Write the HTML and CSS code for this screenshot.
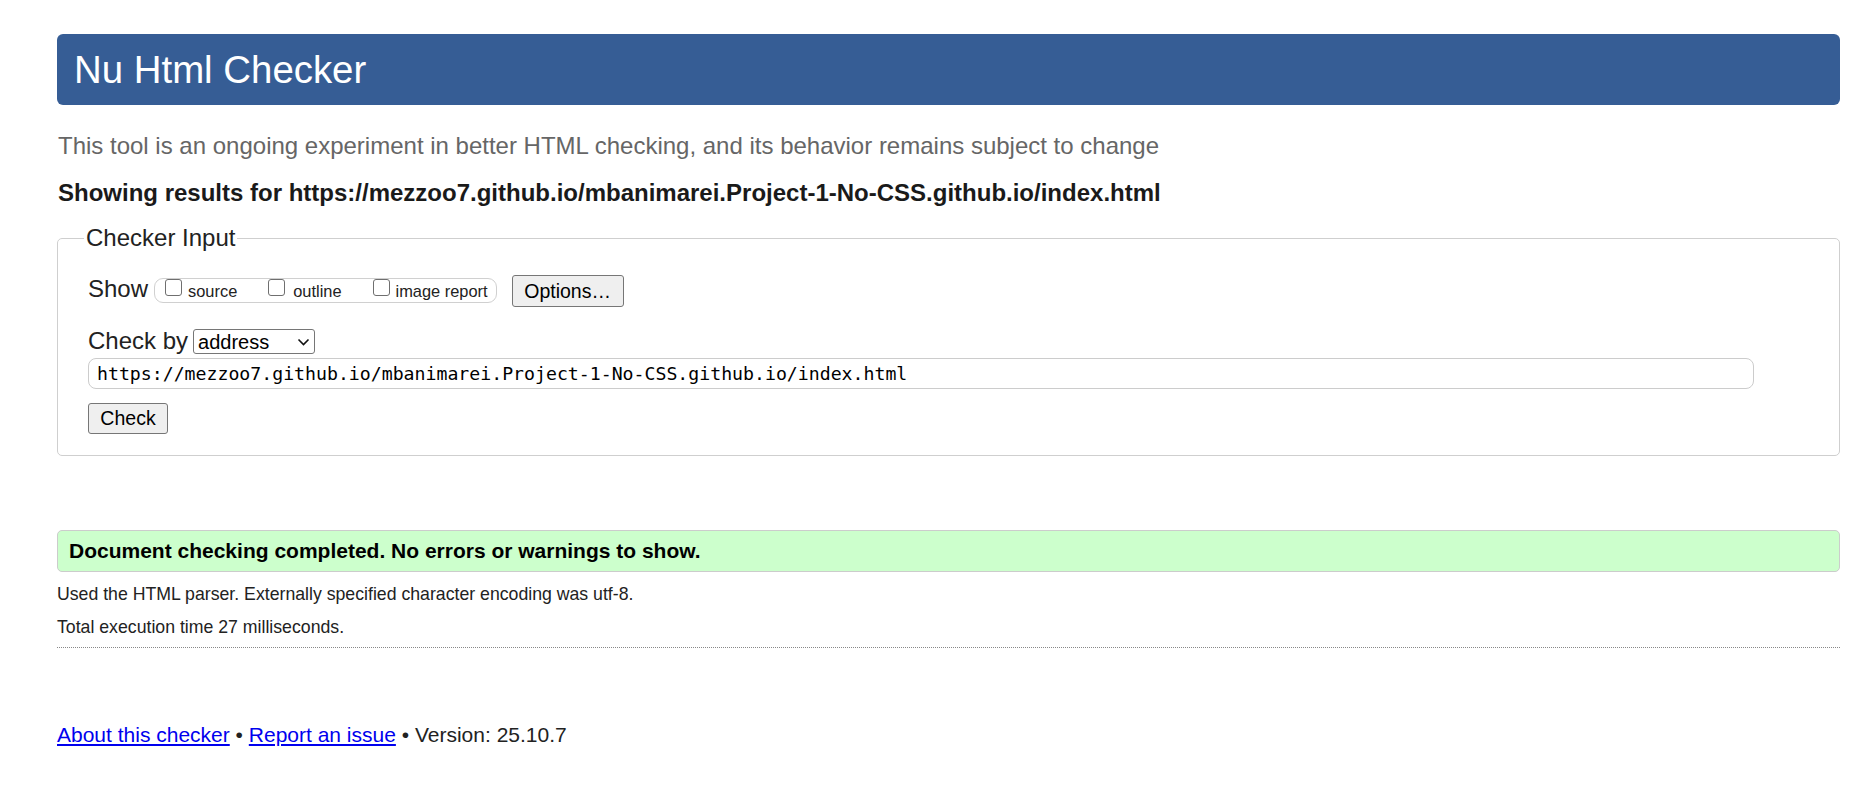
FILE: index.html
```html
<!DOCTYPE html>
<html lang="en">
<head>
<meta charset="utf-8">
<title>Nu Html Checker</title>
<link rel="stylesheet" href="styles.css">
</head>
<body>
<div class="page">
  <h1 class="title">Nu Html Checker</h1>
  <p class="subtitle">This tool is an ongoing experiment in better HTML checking, and its behavior remains subject to change</p>
  <p class="showing">Showing results for https://mezzoo7.github.io/mbanimarei.Project-1-No-CSS.github.io/index.html</p>

  <fieldset class="input-box">
    <legend class="legend">Checker Input</legend>
    <div class="show-row">
      <span class="row-label show-label">Show</span>
      <span class="opts">
        <label class="opt opt-source"><input type="checkbox" class="cb"><span class="opt-text">source</span></label>
        <label class="opt opt-outline"><input type="checkbox" class="cb"><span class="opt-text">outline</span></label>
        <label class="opt opt-image"><input type="checkbox" class="cb"><span class="opt-text">image report</span></label>
      </span>
      <button type="button" class="btn btn-options">Options…</button>
    </div>
    <div class="by-row">
      <span class="row-label by-label">Check by</span>
      <span class="select-wrap">
        <select class="select"><option>address</option></select>
        <svg class="chevron" width="13" height="8" viewBox="0 0 13 8" aria-hidden="true"><path d="M1.5 1.5 L6.5 6.5 L11.5 1.5" fill="none" stroke="#111" stroke-width="1.6"/></svg>
      </span>
    </div>
    <input type="text" class="url" value="https://mezzoo7.github.io/mbanimarei.Project-1-No-CSS.github.io/index.html">
    <div class="check-row">
      <button type="button" class="btn btn-check">Check</button>
    </div>
  </fieldset>

  <div class="success">Document checking completed. No errors or warnings to show.</div>
  <p class="info info-parser">Used the HTML parser. Externally specified character encoding was utf-8.</p>
  <p class="info info-time">Total execution time 27 milliseconds.</p>

  <p class="footer"><a href="#" class="link">About this checker</a> • <a href="#" class="link">Report an issue</a> • Version: 25.10.7</p>
</div>
</body>
</html>
```

FILE: styles.css
```css
html, body {
  margin: 0;
  padding: 0;
  background: #fff;
}
body {
  font-family: "Liberation Sans", Arial, sans-serif;
  color: #222;
}
.page {
  padding: 34px 11px 0 57px;
}
.title {
  margin: 0;
  height: 71px;
  line-height: 71px;
  background: #365d95;
  color: #fff;
  font-weight: normal;
  font-size: 38.4px;
  padding-left: 17px;
  border-radius: 6px;
}
.subtitle {
  margin: 26px 0 0 1px;
  font-size: 24px;
  line-height: 30px;
  color: #666;
}
.showing {
  margin: 17px 0 0 1px;
  font-size: 24px;
  line-height: 30px;
  font-weight: bold;
  color: #1a1a1a;
}
.input-box {
  margin: 16px 0 0 0;
  border: 1px solid #cfcfcf;
  border-radius: 5px;
  padding: 23px 30px 21px 30px;
  min-width: 0;
}
.legend {
  font-size: 24px;
  line-height: 28px;
  padding: 0 2px;
  margin-left: -4px;
  color: #222;
}
.show-row {
  display: flex;
  align-items: flex-start;
  height: 32px;
}
.row-label {
  font-size: 24px;
  line-height: 28px;
  color: #222;
}
.show-label {
  margin-right: 6px;
}
.opts {
  display: flex;
  align-items: flex-start;
  box-sizing: border-box;
  height: 25px;
  margin-top: 3px;
  padding: 0 8px 0 10px;
  border: 1px solid #d0d0d0;
  border-radius: 9px;
}
.opt {
  display: flex;
  align-items: flex-start;
  font-size: 16.4px;
  line-height: 20px;
}
.opt + .opt {
  margin-left: 31px;
}
.cb {
  appearance: none;
  -webkit-appearance: none;
  width: 17px;
  height: 17px;
  margin: 0;
  box-sizing: border-box;
  border: 1px solid #6f6f6f;
  border-radius: 3px;
  background: #fff;
}
.opt-text {
  margin-top: 2px;
  margin-left: 6px;
}
.opt-outline .opt-text {
  margin-left: 8px;
}
.opt-image .opt-text {
  margin-left: 6px;
}
.btn {
  font-family: "Liberation Sans", Arial, sans-serif;
  font-size: 19.5px;
  color: #000;
  background: #efefef;
  border: 1px solid #767676;
  border-radius: 3px;
  padding: 0;
  box-sizing: border-box;
}
.btn-options {
  margin-left: 15px;
  width: 112px;
  height: 32px;
}
.by-row {
  display: flex;
  align-items: flex-start;
  margin-top: 20px;
}
.by-label {
  margin-right: 5px;
}
.select-wrap {
  position: relative;
  display: block;
  margin-top: 2px;
}
.select {
  appearance: none;
  -webkit-appearance: none;
  display: block;
  width: 122px;
  height: 25px;
  box-sizing: border-box;
  border: 1px solid #767676;
  border-radius: 3px;
  background: #fff;
  font-family: "Liberation Sans", Arial, sans-serif;
  font-size: 20px;
  color: #000;
  padding: 0 0 0 4px;
  margin: 0;
}
.chevron {
  position: absolute;
  left: 104px;
  top: 9px;
  pointer-events: none;
}
.url {
  display: block;
  margin: 3px 0 0 0;
  width: 1666px;
  height: 31px;
  box-sizing: border-box;
  border: 1px solid #cccccc;
  border-radius: 8px;
  padding: 0 0 0 8px;
  font-family: "DejaVu Sans Mono", "Liberation Mono", monospace;
  font-size: 18.2px;
  color: #000;
  background: #fff;
}
.check-row {
  margin-top: 14px;
  display: flex;
}
.btn-check {
  width: 80px;
  height: 31px;
}
.success {
  margin-top: 74px;
  box-sizing: border-box;
  height: 42px;
  line-height: 40px;
  padding-left: 11px;
  border: 1px solid #cccccc;
  border-radius: 5px;
  background: #ccffcc;
  font-weight: bold;
  font-size: 21px;
  color: #000;
}
.info {
  margin: 0;
  font-size: 17.7px;
  line-height: 22px;
  color: #222;
}
.info-parser {
  margin-top: 11px;
}
.info-time {
  margin-top: 11px;
  padding-bottom: 9px;
  border-bottom: 1px dotted #888;
}
.footer {
  margin: 74px 0 0 0;
  font-size: 21px;
  line-height: 26px;
  color: #222;
}
.link {
  color: #0000ee;
  text-decoration: underline;
}
```
